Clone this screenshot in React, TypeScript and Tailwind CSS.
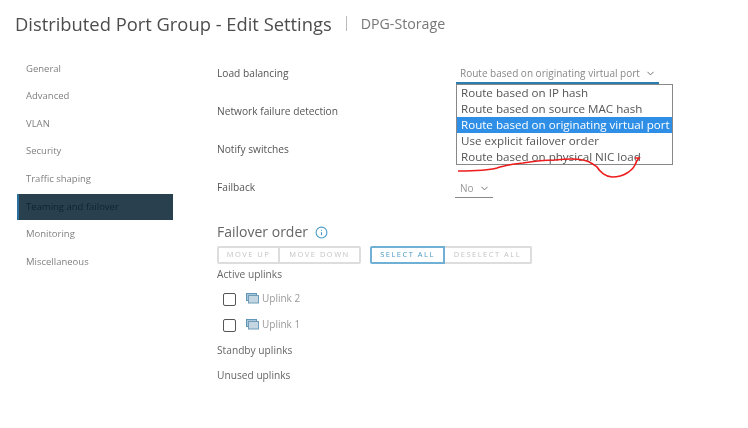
import { ChevronDown, Info } from 'lucide-react';

const navItems = ['General', 'Advanced', 'VLAN', 'Security', 'Traffic shaping', 'Teaming and failover', 'Monitoring', 'Miscellaneous'];

const options = [
  'Route based on IP hash',
  'Route based on source MAC hash',
  'Route based on originating virtual port',
  'Use explicit failover order',
  'Route based on physical NIC load',
];

const settings = ['Load balancing', 'Network failure detection', 'Notify switches', 'Failback'];

function UplinkIcon() {
  return (
    <svg width="13" height="11" viewBox="0 0 13 11" className="shrink-0">
      <rect x="0.5" y="0.5" width="10" height="7" fill="#a9c6d8" stroke="#5f97b8" />
      <rect x="2.5" y="2.5" width="10" height="7.5" fill="#c3d6e2" stroke="#6f9db9" />
    </svg>
  );
}

function Uplink({ name }: { name: string }) {
  return (
    <div className="flex items-center h-[26px] pl-[6px]">
      <span className="w-[13px] h-[13px] border border-[#555] rounded-[2px] mr-[10px] mt-[2px]" />
      <UplinkIcon />
      <span className="ml-[3px] text-[#999] text-[10px]">{name}</span>
    </div>
  );
}

export default function App() {
  return (
    <div className="relative w-[748px] h-[428px] bg-white overflow-hidden font-['Open_Sans',sans-serif] blur-[0.5px]">
      {/* Header */}
      <div className="flex items-center pl-[15px] pt-[11px] h-[36px]">
        <h1 className="text-[18.35px] leading-[24px] text-[#4d4d4d]">Distributed Port Group - Edit Settings</h1>
        <span className="w-px h-[15px] bg-[#bbb] ml-[14px] mr-[14px]" />
        <span className="text-[14.2px] text-[#777]">DPG-Storage</span>
      </div>

      <div className="flex mt-[18px]">
        {/* Sidebar */}
        <nav className="w-[174px] pl-[17px] pt-[1px] shrink-0">
          {navItems.map((item) => (
            <div key={item} className="h-[27.6px] flex items-center">
              {item === 'Teaming and failover' ? (
                <div className="w-[156px] h-[26px] flex items-center pl-[7px] text-[9.5px] text-[#0f2430] bg-[#29414f] border-l-2 border-[#2b6f9c]">
                  {item}
                </div>
              ) : (
                <span className="pl-[9px] text-[9.5px] text-[#808080]">{item}</span>
              )}
            </div>
          ))}
        </nav>

        {/* Settings */}
        <main className="flex-1 pl-[43px]">
          <div className="pt-[1px]">
            {settings.map((label) => (
              <div key={label} className="h-[38px] flex items-center text-[10.2px] font-medium text-[#555]">
                {label}
              </div>
            ))}
          </div>

          <div className="mt-[15px] flex items-center text-[14px] font-medium text-[#666] leading-[20px]">
            Failover order
            <Info size={13} className="ml-[7px] text-[#4a9bc9]" />
          </div>

          <div className="flex mt-[4px] text-[7.5px] tracking-[1.5px] font-medium">
            <div className="flex h-[18px] border-2 border-[#ddd] rounded-[2px] text-[#c4c4c4]">
              <span className="w-[61px] flex items-center justify-center border-r-2 border-[#ddd]">MOVE UP</span>
              <span className="w-[79px] flex items-center justify-center">MOVE DOWN</span>
            </div>
            <div className="flex h-[18px] ml-[9px] text-[#c4c4c4]">
              <span className="w-[75px] flex items-center justify-center border-2 border-[#6fb0d4] rounded-l-[2px] text-[#4a9bc9]">SELECT ALL</span>
              <span className="w-[87px] flex items-center justify-center border-2 border-l-0 border-[#ddd] rounded-r-[2px]">DESELECT ALL</span>
            </div>
          </div>

          <div className="mt-[1px] h-[20px] flex items-center text-[10.2px] font-medium text-[#666]">Active uplinks</div>
          <div>
            <Uplink name="Uplink 2" />
            <Uplink name="Uplink 1" />
          </div>
          <div className="mt-[1px] h-[25px] flex items-center text-[10.2px] font-medium text-[#666]">Standby uplinks</div>
          <div className="h-[25px] flex items-center text-[10.2px] font-medium text-[#666]">Unused uplinks</div>
        </main>
      </div>

      {/* Load balancing select */}
      <div className="absolute left-[456px] top-[65px] w-[203px] h-[19px] border-b-2 border-[#2b7fb0] pl-[4px] flex items-center text-[10px] text-[#888]">
        Route based on originating virtual port
        <ChevronDown size={11} className="ml-[5px] text-[#666]" />
      </div>

      {/* Open dropdown */}
      <div className="absolute left-[456px] top-[84px] w-[217px] h-[81px] border border-[#888] bg-white text-[11.6px] leading-[15px] text-[#555]">
        {options.map((opt, i) => (
          <div key={opt} className={i === 2 ? 'pl-[4px] h-[16px] bg-[#2f8fe6] text-white whitespace-nowrap' : 'pl-[4px] h-[16px] whitespace-nowrap'}>
            {opt}
          </div>
        ))}
      </div>

      {/* Failback select */}
      <div className="absolute left-[455px] top-[179px] w-[38px] h-[19px] border-b border-[#888] pl-[5px] flex items-center text-[10px] text-[#999]">
        No
        <ChevronDown size={11} className="ml-[5px] text-[#666]" />
      </div>

      {/* Red annotation */}
      <svg className="absolute left-0 top-0 pointer-events-none" width="748" height="428" viewBox="0 0 748 428" fill="none">
        <path
          d="M458 171 C475 171 490 170 497 168 C505 165 515 164 523 163 C535 161 545 160 555 160 C565 159 578 159 583 160 C590 161 594 165 597 167 C600 172 606 177 612 177 C618 177 624 175 627 173 C632 170 634 167 635 165 C636 162 637 160 639 158 L635 158"
          stroke="#ee1c1c"
          strokeWidth="1.6"
        />
      </svg>
    </div>
  );
}
